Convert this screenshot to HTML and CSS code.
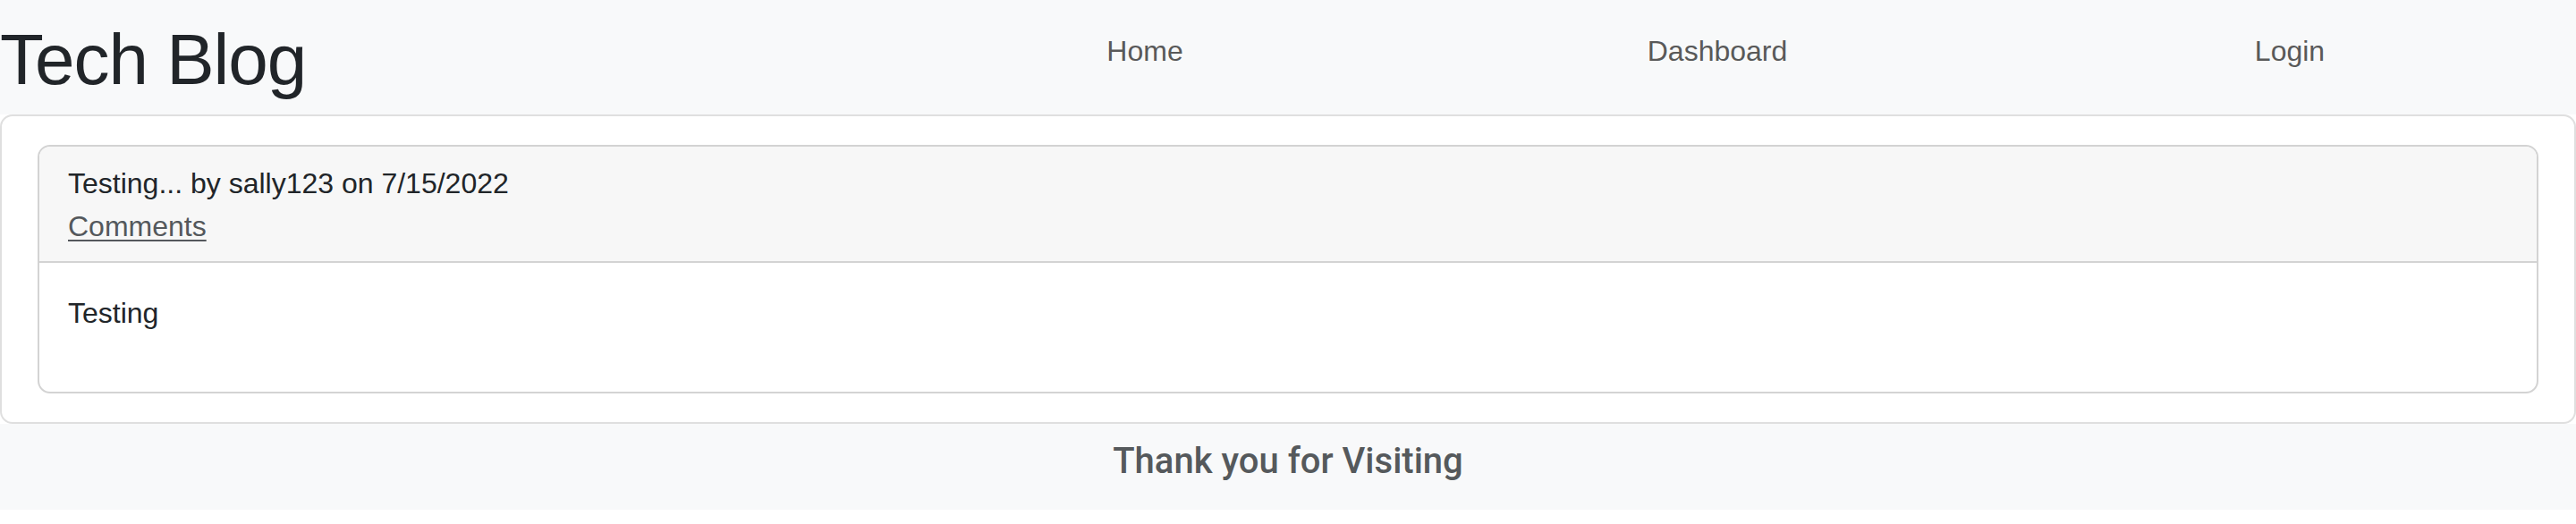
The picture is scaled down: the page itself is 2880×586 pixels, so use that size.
FILE: index.html
```html
<!DOCTYPE html>
<html lang="en">
<head>
<meta charset="utf-8">
<title>Tech Blog</title>
<link rel="stylesheet" href="styles.css">
</head>
<body>
<header class="site-header">
  <h1 class="brand">Tech Blog</h1>
  <nav class="nav">
    <a class="nav-link" href="#">Home</a>
    <a class="nav-link" href="#">Dashboard</a>
    <a class="nav-link" href="#">Login</a>
  </nav>
</header>
<main class="outer-card">
  <article class="post-card">
    <div class="post-header">
      <div class="post-title">Testing... by sally123 on 7/15/2022</div>
      <a class="comments-link" href="#">Comments</a>
    </div>
    <div class="post-body">
      <p class="post-text">Testing</p>
    </div>
  </article>
</main>
<footer class="site-footer">
  <h5 class="footer-text">Thank you for Visiting</h5>
</footer>
</body>
</html>
```
FILE: styles.css
```css
* { box-sizing: border-box; }
html, body { margin: 0; padding: 0; }
body {
  background: #ffffff;
  font-family: "Liberation Sans", Arial, sans-serif;
  color: #212529;
  font-size: 32px;
  line-height: 48px;
}
.site-header {
  background: #f8f9fa;
  height: 128px;
  display: flex;
  align-items: flex-start;
}
.brand {
  width: 960px;
  margin: 0;
  padding-top: 19px;
  font-size: 80px;
  line-height: 96px;
  font-weight: 400;
  letter-spacing: -1px;
  color: #212529;
}
.nav {
  flex: 1;
  display: flex;
  padding-top: 33px;
}
.nav-link {
  flex: 1;
  text-align: center;
  color: #595959;
  text-decoration: none;
  font-size: 32px;
  line-height: 48px;
}
.outer-card {
  display: block;
  border: 2px solid #dfdfdf;
  border-radius: 14px;
  padding: 32px 40px;
  background: #fff;
}
.post-card {
  border: 2px solid #d3d3d3;
  border-radius: 14px;
  overflow: hidden;
}
.post-header {
  background: #f7f7f7;
  border-bottom: 2px solid #d3d3d3;
  padding: 17px 32px 15px;
}
.post-title { color: #212529; }
.comments-link {
  color: #54585c;
  text-decoration: underline;
  text-decoration-thickness: 2px;
  text-underline-offset: 4px;
}
.post-body {
  padding: 32px 32px;
}
.post-text {
  margin: 0 0 32px;
}
.site-footer {
  background: #f8f9fa;
  height: 96px;
  padding: 18px 0 30px;
  text-align: center;
}
.footer-text {
  margin: 0;
  font-family: Roboto, "Liberation Sans", sans-serif;
  font-size: 40px;
  line-height: 48px;
  font-weight: 500;
  color: #55595c;
}
```
